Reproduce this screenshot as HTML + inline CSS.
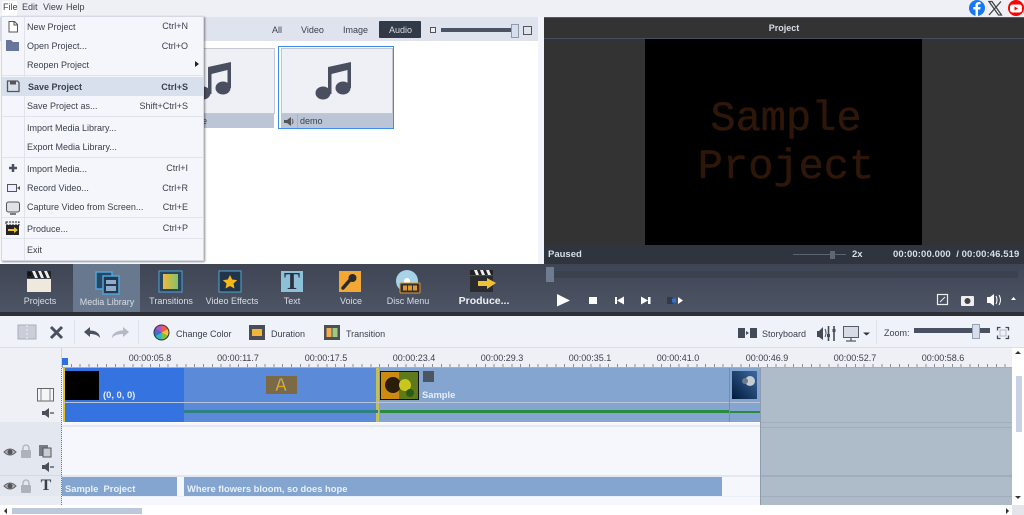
<!DOCTYPE html>
<html><head><meta charset="utf-8"><style>
html,body{margin:0;padding:0;width:1024px;height:515px;overflow:hidden;background:#eef0f6}
body{font-family:"Liberation Sans",sans-serif;font-size:9px;color:#3b404c;position:relative;filter:blur(.3px)}
.a,.t{position:absolute}
.t{white-space:nowrap;line-height:12px}
.c{transform:translateX(-50%)}
.r{text-align:right;width:80px}
svg{position:absolute;overflow:visible}
.w{color:#d8dde6}
.b{font-weight:bold}
.k{font-size:9.4px}
</style></head><body>
<!-- top menu -->
<div class="a" style="left:0;top:0;width:1024px;height:17px;background:#eef0f6"></div>
<div class="a" style="left:2px;top:1px;width:15px;height:15px;background:#fff"></div>
<div class="t" style="left:3px;top:1px">File</div><div class="t" style="left:22px;top:1px">Edit</div><div class="t" style="left:43px;top:1px">View</div><div class="t" style="left:66px;top:1px">Help</div>
<!-- social -->
<svg style="left:969px;top:0" width="55" height="16"><circle cx="8" cy="8" r="8" fill="#1877f2"/><path d="M9 16V9.500h2.200l.4-2.500H9V5.500c0-.8.4-1.300 1.400-1.300h1.200V2.100C11 2 10.300 2 9.800 2 7.700 2 6.500 3.200 6.500 5.200V7H4.300v2.500h2.200V16z" fill="#fff"/><path d="M20 1.500h3l9.500 13.500h-3zM32 1.500l-12 13.500" fill="none" stroke="#444" stroke-width="1.300"/><circle cx="47" cy="8" r="8" fill="#f00"/><rect x="41" y="4.500" width="12" height="8" rx="2.500" fill="#fff"/><path d="M45.500 6.500v4l3.500-2z" fill="#f00"/></svg>
<!-- media panel -->
<div class="a" style="left:0;top:17px;width:538px;height:247px;background:#fff"></div>
<div class="a" style="left:0;top:17px;width:538px;height:24px;background:#dfe3ee"></div>
<div class="a" style="left:538px;top:17px;width:6px;height:247px;background:#f2f4f9"></div>
<div class="t" style="left:272px;top:24px">All</div><div class="t" style="left:301px;top:24px">Video</div><div class="t" style="left:343px;top:24px">Image</div>
<div class="a" style="left:379px;top:21px;width:42px;height:17px;background:#333a47;border-radius:1px"></div>
<div class="t w" style="left:389px;top:24px">Audio</div>
<div class="a" style="left:430px;top:27px;width:4px;height:4px;border:1px solid #555;background:#eef0f6"></div>
<div class="a" style="left:441px;top:28px;width:71px;height:4px;background:#4b5364"></div>
<div class="a" style="left:511px;top:24px;width:6px;height:12px;background:#d7deeb;border:1px solid #8f9ab0"></div>
<div class="a" style="left:523px;top:26px;width:7px;height:7px;border:1.500px solid #555"></div>
<!-- thumb 1 -->
<div class="a" style="left:150px;top:48px;width:123px;height:64px;background:#eef0f6;border:1px solid #c5c8d0"></div>
<div class="a" style="left:150px;top:114px;width:124px;height:14px;background:#bcc5d6"></div>
<div class="t" style="left:202px;top:115px">e</div>
<svg style="left:195px;top:60px" width="40" height="42"><g fill="#4a4f60"><path d="M13 7l23-5v26h-3.500V10L16.500 14v20H13z"/><ellipse cx="8" cy="33" rx="7.500" ry="6.500"/><ellipse cx="28" cy="28" rx="7.500" ry="6.500"/></g></svg>
<!-- thumb 2 -->
<div class="a" style="left:278px;top:46px;width:114px;height:81px;border:1.500px solid #3f8bea;background:#fff"></div>
<div class="a" style="left:281px;top:48px;width:110px;height:64px;background:#eef0f6;border:1px solid #c5c8d0"></div>
<div class="a" style="left:281px;top:114px;width:112px;height:14px;background:#bcc5d6"></div>
<div class="a" style="left:297px;top:114px;width:1px;height:14px;background:#a9b2c4"></div>
<div class="t" style="left:300px;top:115px">demo</div>
<svg style="left:284px;top:117px" width="11" height="9"><path d="M0 3h3l4-3v9l-4-3H0z" fill="#555"/><path d="M8 2q2 2.500 0 5" fill="none" stroke="#555"/></svg>
<svg style="left:315px;top:60px" width="40" height="42"><g fill="#4a4f60"><path d="M13 7l23-5v26h-3.500V10L16.500 14v20H13z"/><ellipse cx="8" cy="33" rx="7.500" ry="6.500"/><ellipse cx="28" cy="28" rx="7.500" ry="6.500"/></g></svg>
<!-- preview -->
<div class="a" style="left:544px;top:17px;width:480px;height:228px;background:#333"></div>
<div class="a" style="left:544px;top:17px;width:480px;height:1px;background:#555a68"></div>
<div class="a" style="left:544px;top:38px;width:480px;height:1px;background:#474d5e"></div>
<div class="t b w" style="left:784px;top:22px;transform:translateX(-50%)">Project</div>
<div class="a" style="left:645px;top:39px;width:277px;height:206px;background:#000"></div>
<div class="t" style="left:786px;top:95px;transform:translateX(-50%);font-family:'Liberation Mono',monospace;font-size:42px;line-height:48px;color:#2e1609;text-align:center;-webkit-text-stroke:.5px #2e1609">Sample<br>Project</div>
<div class="a" style="left:544px;top:245px;width:480px;height:19px;background:#2f343e"></div>
<div class="t b w" style="left:548px;top:249px;font-size:9.500px">Paused</div>
<div class="a" style="left:793px;top:254px;width:53px;height:1px;background:#5c6472"></div>
<div class="a" style="left:830px;top:251px;width:5px;height:8px;background:#5f6776"></div>
<div class="t b w" style="left:852px;top:249px;font-size:9.500px">2x</div>
<div class="t b w" style="left:893px;top:249px;font-size:9.500px;letter-spacing:.1px">00:00:00.000&nbsp; / 00:00:46.519</div>
<!-- main toolbar -->
<div class="a" style="left:0;top:264px;width:1024px;height:48px;background:linear-gradient(#3f4553,#4d5566)"></div>
<div class="a" style="left:0;top:312px;width:1024px;height:4px;background:#2d3037"></div>
<div class="a" style="left:73px;top:264px;width:67px;height:48px;background:#68788e"></div>
<!-- Projects icon -->
<svg style="left:27px;top:271px" width="24" height="22"><rect y="8" width="24" height="13" fill="#eee9dc"/><rect y="0" width="24" height="7" fill="#222"/><path d="M5 0h3l3 7H8zM11 0h3l3 7h-3zM17 0h3l3 7h-3z" fill="#eee"/><circle cx="2.500" cy="3" r="2" fill="#111"/></svg>
<!-- Media lib icon -->
<svg style="left:95px;top:271px" width="25" height="24"><rect x="1" y="1" width="16" height="17" fill="#2a4666" stroke="#4ea5d8" stroke-width="1.500"/><rect x="8" y="5" width="16" height="18" fill="#25384f" stroke="#4ea5d8" stroke-width="1.500"/><rect x="11" y="9" width="10" height="4" fill="#8eaccc"/><rect x="11" y="15" width="10" height="5" fill="#8eaccc"/></svg>
<!-- Transitions -->
<svg style="left:159px;top:271px" width="23" height="22"><defs><linearGradient id="g"><stop offset="0" stop-color="#f6b73c"/><stop offset="1" stop-color="#7ec26b"/></linearGradient></defs><rect width="23" height="21" fill="#28445e" stroke="#4ea5d8"/><rect x="4" y="3" width="15" height="15" fill="url(#g)"/></svg>
<!-- effects -->
<svg style="left:219px;top:271px" width="23" height="22"><rect width="22" height="21" fill="#21344a" stroke="#4ea5d8"/><path d="M11 4l2.200 4.500 5 .6-3.700 3.400 1 5-4.500-2.500-4.500 2.500 1-5-3.700-3.400 5-.6z" fill="#f7b81c"/></svg>
<!-- Text -->
<div class="a" style="left:281px;top:271px;width:22px;height:21px;background:#8ec0d9"></div>
<div class="t" style="left:292px;top:270px;transform:translateX(-50%);font:bold 24px/24px 'Liberation Serif',serif;color:#2a3240">T</div>
<!-- Voice -->
<div class="a" style="left:339px;top:271px;width:22px;height:21px;background:#f3a833"></div>
<svg style="left:341px;top:273px" width="18" height="18"><path d="M2 15l7-8" stroke="#2a2a2a" stroke-width="3.500" stroke-linecap="round"/><circle cx="11.500" cy="5" r="4" fill="#2a2a2a"/></svg>
<!-- Disc -->
<svg style="left:395px;top:270px" width="26" height="24"><circle cx="12" cy="11" r="11" fill="#a7d3e8"/><circle cx="12" cy="11" r="3" fill="#fff"/><rect x="5" y="13" width="20" height="10" rx="1" fill="#2e3138" stroke="#e0982c"/><rect x="8" y="15.500" width="4" height="5" fill="#e0982c"/><rect x="13" y="15.500" width="4" height="5" fill="#e0982c"/><rect x="18" y="15.500" width="4" height="5" fill="#e0982c"/></svg>
<!-- Produce -->
<svg style="left:470px;top:270px" width="27" height="24"><rect y="6" width="23" height="16" fill="#292b2f"/><rect width="23" height="5" fill="#222"/><path d="M4 0h3l2 5H6zM10 0h3l2 5h-3zM16 0h3l2 5h-3z" fill="#eee"/><path d="M8 11h9V8l9 5-9 6v-3H8z" fill="#f1c232"/></svg>
<div class="t w" style="left:40px;top:295px;transform:translateX(-50%)">Projects</div>
<div class="t w" style="left:107px;top:296px;transform:translateX(-50%)">Media Library</div>
<div class="t w" style="left:171px;top:295px;transform:translateX(-50%)">Transitions</div>
<div class="t w" style="left:232px;top:295px;transform:translateX(-50%)">Video Effects</div>
<div class="t w" style="left:292px;top:295px;transform:translateX(-50%)">Text</div>
<div class="t w" style="left:351px;top:295px;transform:translateX(-50%)">Voice</div>
<div class="t w" style="left:408px;top:295px;transform:translateX(-50%)">Disc Menu</div>
<div class="t b" style="left:484px;top:295px;transform:translateX(-50%);color:#eef0f4;font-size:10.500px">Produce...</div>
<!-- seek -->
<div class="a" style="left:546px;top:271px;width:472px;height:7px;background:#3b424f"></div>
<div class="a" style="left:546px;top:267px;width:8px;height:15px;background:#6d7c90"></div>
<svg style="left:556px;top:292px" width="470" height="16"><g fill="#fff"><path d="M1 2l13 6.500L1 14.500z"/><rect x="33" y="5" width="8" height="7"/><path d="M59 5h2v7h-2zM61 8.500l7-4v8z"/><path d="M85 4.500l7 4-7 4zM92 5h2.500v7H92z"/><path d="M122 5l5 3.500-5 3.500z"/></g><rect x="111" y="5" width="6" height="7" fill="#333a48"/><rect x="116" y="6.500" width="4" height="4" fill="#2f6fe0"/>
<rect x="381.500" y="2.500" width="10" height="10" fill="none" stroke="#eee" stroke-width="1.200"/><path d="M384 10l5-5" stroke="#eee"/><rect x="405" y="4" width="13" height="10" rx="1" fill="#eee"/><circle cx="411.500" cy="9" r="3" fill="#444"/><path d="M431 5h3l4-3v12l-4-3h-3z" fill="#fff"/><path d="M440 4q2 4 0 8M443 3q3 5 0 10" stroke="#fff" fill="none"/><path d="M455 8l2.500-3 2.500 3z" fill="#fff"/></svg>
<!-- second toolbar -->
<div class="a" style="left:0;top:316px;width:1024px;height:32px;background:#eff2f8"></div>
<div class="a" style="left:0;top:347px;width:1024px;height:1px;background:#d9deea"></div>
<div class="a" style="left:74px;top:320px;width:1px;height:24px;background:#dde1ea"></div>
<div class="a" style="left:138px;top:320px;width:1px;height:24px;background:#dde1ea"></div>
<svg style="left:18px;top:324px" width="350" height="20"><rect x="0" y="1" width="18" height="14" fill="#c9ced8" stroke="#a9afbb"/><path d="M9 1v14" stroke="#eef" stroke-dasharray="2 2"/>
<path d="M33 3l11 11M44 3L33 14" stroke="#4a5060" stroke-width="3"/>
<path d="M66 8l6-5v3.500c6 0 10 3 10 7.500-2-3-6-4-10-4v3z" fill="#4a5060"/>
<path d="M111 8l-6-5v3.500c-6 0-11 3-11 7.500 2-3 7-4 11-4v3z" fill="#b4b9c4"/>
<circle cx="143.500" cy="8.500" r="8" fill="#333"/><path d="M143.500 1.500a7 7 0 0 1 6 3.500l-6 3.500z" fill="#f25b54"/><path d="M149.500 5a7 7 0 0 1 0 7l-6-3.500z" fill="#f7c136"/><path d="M149.500 12a7 7 0 0 1-6 3.500v-7z" fill="#7bc043"/><path d="M143.500 15.500a7 7 0 0 1-6-3.500l6-3.500z" fill="#2fb6c6"/><path d="M137.500 12a7 7 0 0 1 0-7l6 3.500z" fill="#3b6fd8"/><path d="M137.500 5a7 7 0 0 1 6-3.500v7z" fill="#b355c4"/>
<rect x="231" y="1" width="16" height="15" fill="#4a4d54"/><rect x="234" y="5" width="10" height="7" fill="#f0b63c"/>
<rect x="306" y="1" width="16" height="15" fill="#4a4f59"/><rect x="308.500" y="4" width="5" height="9" fill="#f4ad4c"/><rect x="314.500" y="4" width="5" height="9" fill="#9ccb7c"/></svg>
<div class="t" style="left:176px;top:328px">Change Color</div>
<div class="t" style="left:271px;top:328px">Duration</div>
<div class="t" style="left:346px;top:328px">Transition</div>
<div class="t" style="left:762px;top:328px">Storyboard</div>
<svg style="left:738px;top:326px" width="140" height="16"><rect x="0" y="2" width="7" height="10" fill="#444a5a"/><path d="M8 5l3 2-3 2z" fill="#444a5a"/><rect x="12" y="2" width="7" height="10" fill="#444a5a"/>
<path d="M79 5h2l4-4v13l-4-3h-2z" fill="#444a5a"/><path d="M87 3q2 4 0 8" fill="none" stroke="#444a5a"/><path d="M90.500 0v15M96 0v15" stroke="#444a5a" stroke-width="1.600"/><rect x="89" y="8" width="3" height="3" fill="#444a5a"/><rect x="94.500" y="3" width="3" height="3" fill="#444a5a"/>
<rect x="105.500" y="0.500" width="15" height="11" fill="#d7dbe4" stroke="#555b68"/><path d="M113 12v2.500M108 15h10" stroke="#555b68" stroke-width="1.300"/><path d="M125 6.500h7l-3.500 3z" fill="#333"/></svg>
<div class="a" style="left:876px;top:320px;width:1px;height:24px;background:#dde1ea"></div>
<div class="t" style="left:884px;top:327px">Zoom:</div>
<div class="a" style="left:914px;top:328px;width:76px;height:5px;background:#4a5162"></div>
<div class="a" style="left:972px;top:324px;width:6px;height:13px;background:#d7deeb;border:1px solid #97a2b8"></div>
<svg style="left:997px;top:327px" width="12" height="12"><path d="M.5 3.500V.5h3M8.500.5h3v3M11.500 8.500v3h-3M3.500 11.500h-3v-3" fill="none" stroke="#444a5a" stroke-width="1.300"/><rect x="3" y="3" width="6" height="6" fill="none" stroke="#a4abb8" stroke-width=".8"/></svg>
<!-- ruler -->
<div class="a" style="left:0;top:348px;width:1012px;height:19px;background:#eef0f6"></div>
<div class="a" style="left:61px;top:348px;width:1px;height:19px;background:#cdd3df"></div>
<div class="a" style="left:62px;top:364px;width:950px;height:3px;background:repeating-linear-gradient(90deg,#8b8f98 0 1px,transparent 1px 8.810px)"></div>
<div class="a" style="left:62px;top:367px;width:950px;height:1px;background:#a9aeb8"></div>
<div class="a" style="left:62px;top:358px;width:6px;height:7px;background:#2f6fe0"></div>
<div class="t c" style="left:150px;top:352px">00:00:05.8</div><div class="t c" style="left:238px;top:352px">00:00:11.7</div><div class="t c" style="left:326px;top:352px">00:00:17.5</div><div class="t c" style="left:414px;top:352px">00:00:23.4</div><div class="t c" style="left:502px;top:352px">00:00:29.3</div><div class="t c" style="left:590px;top:352px">00:00:35.1</div><div class="t c" style="left:678px;top:352px">00:00:41.0</div><div class="t c" style="left:767px;top:352px">00:00:46.9</div><div class="t c" style="left:855px;top:352px">00:00:52.7</div><div class="t c" style="left:943px;top:352px">00:00:58.6</div>
<!-- timeline left -->
<div class="a" style="left:0;top:368px;width:62px;height:54px;background:#eef0f6"></div>
<div class="a" style="left:0;top:422px;width:62px;height:53px;background:#e3e7f0"></div>
<div class="a" style="left:0;top:475px;width:62px;height:21px;background:#e3e7f0;border-top:1px solid #d4d9e4;box-sizing:border-box"></div>
<div class="a" style="left:0;top:496px;width:62px;height:9px;background:#e9ecf3"></div>
<div class="a" style="left:61px;top:368px;width:1px;height:137px;background:repeating-linear-gradient(#777 0 1px,transparent 1px 2px)"></div>
<svg style="left:0;top:368px" width="62" height="130"><rect x="37.500" y="20.500" width="16" height="12.500" fill="#f4f5f8" stroke="#666"/><path d="M41 21v12M50 21v12" stroke="#888"/><path d="M42 43h3l4-3v10l-4-3h-3z" fill="#4b4f58"/><path d="M50 45h4" stroke="#4b4f58" stroke-width="1.300"/>
<path d="M4 84q6-6 12 0q-6 6-12 0z" fill="#aeb3bd" stroke="#666"/><circle cx="10" cy="84" r="2.500" fill="#555"/><rect x="21" y="82" width="10" height="8" rx="1" fill="#adb2bc"/><path d="M23 82v-2a3 3 0 0 1 6 0v2" fill="none" stroke="#adb2bc" stroke-width="1.300"/><rect x="39" y="77" width="9" height="11" fill="#777d88"/><rect x="43" y="80" width="8" height="9" fill="#c8ccd4" stroke="#555"/>
<path d="M42 97h3l4-3v10l-4-3h-3z" fill="#4b4f58"/><path d="M50 99h4" stroke="#4b4f58" stroke-width="1.300"/>
<path d="M4 118q6-6 12 0q-6 6-12 0z" fill="#aeb3bd" stroke="#666"/><circle cx="10" cy="118" r="2.500" fill="#555"/><rect x="21" y="117" width="10" height="8" rx="1" fill="#adb2bc"/><path d="M23 117v-2a3 3 0 0 1 6 0v2" fill="none" stroke="#adb2bc" stroke-width="1.300"/></svg>
<div class="t" style="left:46px;top:479px;transform:translateX(-50%);font:bold 16px/14px 'Liberation Serif',serif;color:#3a3f4a">T</div>
<!-- tracks -->
<div class="a" style="left:62px;top:368px;width:699px;height:137px;background:#f5f7fd"></div>
<div class="a" style="left:62px;top:422px;width:699px;height:1px;background:#fff"></div>
<div class="a" style="left:62px;top:425px;width:699px;height:2px;background:#e5e8f0"></div>
<div class="a" style="left:62px;top:475px;width:699px;height:2px;background:#e4e7ef"></div>
<div class="a" style="left:62px;top:496px;width:699px;height:1px;background:#eceef5"></div>
<div class="a" style="left:63px;top:368px;width:121px;height:54px;background:#3574e0"></div>
<div class="a" style="left:184px;top:368px;width:194px;height:54px;background:#5b8bd8"></div>
<div class="a" style="left:378px;top:368px;width:382px;height:54px;background:#83a5d0"></div>
<div class="a" style="left:63px;top:368px;width:2px;height:54px;background:#e9c21c"></div>
<div class="a" style="left:376px;top:368px;width:3px;height:54px;background:#c3bf5c"></div>
<div class="a" style="left:63px;top:402px;width:697px;height:1px;background:#b9c4d6"></div>
<div class="a" style="left:184px;top:410px;width:194px;height:3px;background:#2f7f86"></div>
<div class="a" style="left:380px;top:410px;width:350px;height:3px;background:#2a8a3e"></div>
<div class="a" style="left:730px;top:411px;width:30px;height:2px;background:#2a8a3e"></div>
<div class="a" style="left:729px;top:368px;width:1px;height:54px;background:#6d8fbd"></div>
<div class="a" style="left:65px;top:371px;width:34px;height:29px;background:#000"></div>
<div class="t b k" style="left:103px;top:389px;color:#e4ebf8">(0, 0, 0)</div>
<div class="a" style="left:266px;top:376px;width:31px;height:18px;background:#7b6a44"></div>
<div class="t b" style="left:281px;top:375px;transform:translateX(-50%);font-size:18px;line-height:20px;color:#e0a51c;-webkit-text-stroke:.5px #3a66b8">A</div>
<svg style="left:380px;top:371px" width="39" height="29"><rect width="39" height="29" fill="#111"/><rect x="1" y="1" width="37" height="27" fill="#5e7a1a"/><rect x="1" y="1" width="18" height="27" fill="#cc8a10"/><circle cx="13" cy="14" r="8" fill="#2a1d0c"/><circle cx="25" cy="14" r="6" fill="#c9c61c"/><circle cx="30" cy="22" r="4" fill="#2d5a16"/></svg>
<div class="a" style="left:423px;top:371px;width:11px;height:11px;background:#4e5562"></div>
<div class="t b k" style="left:422px;top:389px;color:#e8eef8">Sample</div>
<svg style="left:732px;top:371px" width="25" height="28"><defs><linearGradient id="n" x1="1" y1="0" x2="0" y2="1"><stop offset="0" stop-color="#3d6a9f"/><stop offset="1" stop-color="#011a3d"/></linearGradient></defs><rect width="25" height="28" fill="url(#n)"/><circle cx="18" cy="10" r="5" fill="#c5ccd4"/><circle cx="13" cy="10" r="3" fill="#6c7a8a"/></svg>
<div class="a" style="left:62px;top:477px;width:115px;height:19px;background:#83a5d0"></div>
<div class="a" style="left:184px;top:477px;width:538px;height:19px;background:#83a5d0"></div>
<div class="t b k" style="left:65px;top:483px;color:#eaf0f9">Sample&nbsp; Project</div>
<div class="t b k" style="left:187px;top:483px;color:#eaf0f9">Where flowers bloom, so does hope</div>
<!-- gray -->
<div class="a" style="left:761px;top:368px;width:251px;height:137px;background:#aebbc8"></div>
<div class="a" style="left:760px;top:368px;width:1px;height:137px;background:#8d9bac"></div>
<div class="a" style="left:761px;top:422px;width:251px;height:1px;background:#a0adbb"></div>
<div class="a" style="left:761px;top:427px;width:251px;height:1px;background:#a0adbb"></div>
<div class="a" style="left:761px;top:475px;width:251px;height:2px;background:#a0adbb"></div>
<div class="a" style="left:761px;top:496px;width:251px;height:1px;background:#a0adbb"></div>
<!-- scrollbars -->
<div class="a" style="left:1012px;top:348px;width:12px;height:157px;background:#fff"></div>
<div class="a" style="left:1016px;top:376px;width:6px;height:56px;background:#c8d2e6"></div>
<svg style="left:1012px;top:349px" width="12" height="155"><path d="M3 5l3-3 3 3z" fill="#333"/><path d="M3 147h6l-3 3z" fill="#333"/></svg>
<div class="a" style="left:0;top:505px;width:1024px;height:10px;background:#fff"></div>
<div class="a" style="left:12px;top:508px;width:130px;height:6px;background:#bcc8dc"></div>
<div class="a" style="left:1012px;top:505px;width:12px;height:10px;background:#e3e5ea"></div>
<svg style="left:0;top:505px" width="1012" height="10"><path d="M7 3v6l-3-3z" fill="#333"/><path d="M1006 3v6l3-3z" fill="#333"/></svg>
<!-- file menu -->
<div class="a" style="left:1px;top:16px;width:203px;height:245px;background:#f4f6fb;box-shadow:1px 1px 2px rgba(0,0,0,.45);border:1px solid #d5d9e4;box-sizing:border-box"></div>
<div class="a" style="left:24px;top:17px;width:1px;height:243px;background:#e0e3ec"></div>
<div class="a" style="left:2px;top:77px;width:201px;height:19px;background:#d8e0ee"></div>
<div class="a" style="left:2px;top:75px;width:201px;height:1px;background:#e1e4ed"></div>
<div class="a" style="left:2px;top:116px;width:201px;height:1px;background:#e1e4ed"></div>
<div class="a" style="left:2px;top:157px;width:201px;height:1px;background:#e1e4ed"></div>
<div class="a" style="left:2px;top:217px;width:201px;height:1px;background:#e1e4ed"></div>
<div class="a" style="left:2px;top:238px;width:201px;height:1px;background:#e1e4ed"></div>
<div class="t" style="left:27px;top:21px">New Project</div><div class="t r" style="left:108px;top:20px">Ctrl+N</div>
<div class="t" style="left:27px;top:40px">Open Project...</div><div class="t r" style="left:108px;top:40px">Ctrl+O</div>
<div class="t" style="left:27px;top:59px">Reopen Project</div>
<div class="t b" style="left:28px;top:81px">Save Project</div><div class="t r b" style="left:108px;top:81px">Ctrl+S</div>
<div class="t" style="left:27px;top:100px">Save Project as...</div><div class="t r" style="left:108px;top:100px">Shift+Ctrl+S</div>
<div class="t" style="left:27px;top:122px">Import Media Library...</div>
<div class="t" style="left:27px;top:141px">Export Media Library...</div>
<div class="t" style="left:27px;top:163px">Import Media...</div><div class="t r" style="left:108px;top:162px">Ctrl+I</div>
<div class="t" style="left:27px;top:182px">Record Video...</div><div class="t r" style="left:108px;top:182px">Ctrl+R</div>
<div class="t" style="left:27px;top:201px">Capture Video from Screen...</div><div class="t r" style="left:108px;top:201px">Ctrl+E</div>
<div class="t" style="left:27px;top:223px">Produce...</div><div class="t r" style="left:108px;top:222px">Ctrl+P</div>
<div class="t" style="left:27px;top:244px">Exit</div>
<svg style="left:0;top:16px" width="205" height="225"><path d="M9 5.500h5.500l3 3v7.500H9z" fill="#fff" stroke="#555"/><path d="M14 5.500v3.500h3.500" fill="none" stroke="#555"/>
<path d="M6 24h5l2 2h6v9H6z" fill="#66779b"/>
<path d="M195 45l4 3-4 3z" fill="#222"/>
<path d="M7.500 65h10l1.500 1.500V75.500H7.500z" fill="none" stroke="#555" stroke-width="1.300"/><rect x="10" y="65" width="6" height="3.500" fill="#555"/>
<path d="M9 152h8M13 148v8" stroke="#4a5060" stroke-width="2.500"/>
<rect x="7.500" y="168.500" width="9" height="7" fill="#eef" stroke="#555"/><path d="M17 172l3-2v4l-3-2z" fill="#555"/>
<rect x="6.500" y="186" width="13" height="10" rx="2" fill="#dfe2e8" stroke="#555"/><path d="M10 198h6" stroke="#555" stroke-width="1.500"/>
<rect x="6" y="206" width="13" height="13" fill="#23252a"/><path d="M6 206h13v3H6z" fill="#eee" stroke="#222" stroke-dasharray="2 1"/><path d="M8 213h6v-2l4 3-4 3v-2H8z" fill="#f1c232"/></svg>
</body></html>
